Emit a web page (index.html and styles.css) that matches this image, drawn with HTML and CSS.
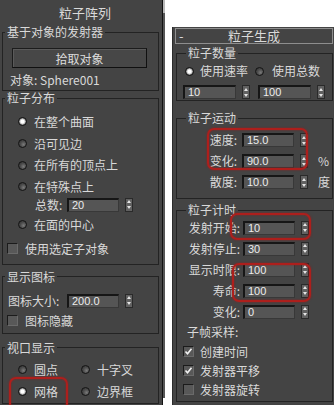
FILE: index.html
```html
<!DOCTYPE html>
<html lang="zh">
<head>
    <meta charset="UTF-8">
    <meta name="viewport" content="width=device-width, initial-scale=1.0">
    <title>粒子阵列 / 粒子生成</title>
    <link rel="stylesheet" href="styles.css">
</head>
<body>
<div class="page">
    <div class="panel left-panel">
        <div class="title">粒子阵列</div>

        <fieldset class="group emitter">
            <legend>基于对象的发射器</legend>
            <button class="pick">拾取对象</button>
            <div class="object">对象: Sphere001</div>
        </fieldset>

        <fieldset class="group spread">
            <legend>粒子分布</legend>
            <div class="radio-row"><span class="radio on"></span>在整个曲面</div>
            <div class="radio-row"><span class="radio"></span>沿可见边</div>
            <div class="radio-row"><span class="radio"></span>在所有的顶点上</div>
            <div class="radio-row"><span class="radio"></span>在特殊点上</div>
            <div class="field-row count">
                <span class="lbl">总数:</span><span class="input">20</span><span class="spin"></span>
            </div>
            <div class="radio-row center"><span class="radio"></span>在面的中心</div>
            <div class="check-row sub-obj"><span class="check"></span>使用选定子对象</div>
        </fieldset>

        <fieldset class="group icons">
            <legend>显示图标</legend>
            <div class="field-row icon-size">
                <span class="lbl">图标大小:</span><span class="input">200.0</span><span class="spin"></span>
            </div>
            <div class="check-row icon-hide"><span class="check"></span>图标隐藏</div>
        </fieldset>

        <fieldset class="group viewport">
            <legend>视口显示</legend>
            <div class="radio-grid">
                <div class="radio-row"><span class="radio"></span>圆点</div>
                <div class="radio-row"><span class="radio"></span>十字叉</div>
                <div class="radio-row"><span class="radio on"></span>网格</div>
                <div class="radio-row"><span class="radio"></span>边界框</div>
            </div>
        </fieldset>

        <div class="mark" style="left:9px; top:377px; width:59px; height:34px;"></div>
    </div>

    <div class="scroll"><div class="thumb"></div></div>

    <div class="panel right-panel">
        <div class="title-bar"><span class="minus">-</span><span class="caption">粒子生成</span><span></span></div>

        <fieldset class="group qty">
            <legend>粒子数量</legend>
            <div class="rate-row">
                <span class="radio on"></span><span class="opt">使用速率</span>
                <span class="radio second"></span><span class="opt">使用总数</span>
            </div>
            <div class="pair-row">
                <span class="input">10</span><span class="spin"></span>
                <span class="input second">100</span><span class="spin"></span>
            </div>
        </fieldset>

        <fieldset class="group motion">
            <legend>粒子运动</legend>
            <div class="field-row"><span class="lbl">速度:</span><span class="input">15.0</span><span class="spin"></span></div>
            <div class="field-row"><span class="lbl">变化:</span><span class="input">90.0</span><span class="spin"></span><span class="unit">%</span></div>
            <div class="field-row"><span class="lbl">散度:</span><span class="input">10.0</span><span class="spin"></span><span class="unit">度</span></div>
        </fieldset>

        <fieldset class="group timing">
            <legend>粒子计时</legend>
            <div class="field-row"><span class="lbl">发射开始:</span><span class="input">10</span><span class="spin"></span></div>
            <div class="field-row"><span class="lbl">发射停止:</span><span class="input">30</span><span class="spin"></span></div>
            <div class="field-row"><span class="lbl">显示时限:</span><span class="input">100</span><span class="spin"></span></div>
            <div class="field-row"><span class="lbl">寿命:</span><span class="input">100</span><span class="spin"></span></div>
            <div class="field-row"><span class="lbl">变化:</span><span class="input">0</span><span class="spin"></span></div>
            <div class="sub-head">子帧采样:</div>
            <div class="check-row">
                <span class="check"><svg width="9" height="9" viewBox="0 0 9 9"><path d="M1.5 4.5l2 2.2 4-5" fill="none" stroke="#f2f2f2" stroke-width="1.6"/></svg></span>创建时间
            </div>
            <div class="check-row">
                <span class="check"><svg width="9" height="9" viewBox="0 0 9 9"><path d="M1.5 4.5l2 2.2 4-5" fill="none" stroke="#f2f2f2" stroke-width="1.6"/></svg></span>发射器平移
            </div>
            <div class="check-row"><span class="check"></span>发射器旋转</div>
        </fieldset>

        <div class="mark" style="left:34px; top:101px; width:101px; height:42px;"></div>
        <div class="mark" style="left:57px; top:186px; width:81px; height:27px;"></div>
        <div class="mark" style="left:59px; top:236px; width:79px; height:39px;"></div>
    </div>
</div>
</body>
</html>
```

FILE: styles.css
```css
* {
    box-sizing: border-box;
}
body {
    margin: 0;
    background: #fff;
    font-family: "Noto Sans CJK SC", "Liberation Sans", sans-serif;
    font-size: 12px;
    line-height: 14px;
    color: #d9d9d9;
}
.page {
    display: flex;
    align-items: flex-start;
    width: 334px;
    height: 405px;
    overflow: hidden;
}
.panel {
    position: relative;
    background: #444;
}

/* left rollout */
.left-panel {
    width: 163px;
    height: 405px;
    border-right: 1px solid #121212;
}
.title {
    height: 25px;
    line-height: 25px;
    padding-left: 8px;
    text-align: center;
    font-size: 13px;
}
.scroll {
    width: 2px;
    height: 398px;
    margin-right: 7px;
    background: #565656;
}
.scroll .thumb {
    height: 13px;
    background: #b8b8b8;
}

/* group boxes */
.group {
    margin: 0;
    padding: 0;
    min-width: 0;
    border: 1px solid #232323;
}
.group legend {
    height: 14px;
    line-height: 14px;
    padding: 0 2px;
    font-size: 12px;
}
.left-panel .group {
    margin: 0 3px 0 2px;
}
.left-panel .group legend {
    margin-left: 2px;
}
.emitter {
    padding-bottom: 3px !important;
}
.pick {
    display: block;
    width: 135px;
    height: 20px;
    margin: 9px 0 0 9px;
    padding: 0;
    font-family: inherit;
    font-size: 12px;
    color: #dcdcdc;
    background: #474747;
    border: 1px solid #1c1c1c;
    border-right-color: #101010;
    border-bottom-color: #101010;
    box-shadow: inset 1px 1px 0 #5a5a5a;
}
.object {
    margin: 5px 0 0 7px;
}
.spread {
    padding: 6px 0 4px !important;
}
.icons {
    margin-top: 5px !important;
    padding: 6px 0 3px !important;
}
.viewport {
    margin-top: 7px !important;
    padding-top: 4px !important;
}

/* radio buttons and checkboxes */
.radio {
    flex: none;
    width: 9px;
    height: 9px;
    margin-right: 7px;
    border-radius: 50%;
    border: 1.5px solid #141414;
    background: radial-gradient(circle at 65% 65%, #7a7a7a 0, #4e4e4e 45%, #383838 80%);
}
.radio.on {
    background: radial-gradient(circle, #fff 0, #fff 1.6px, #bdbdbd 2.6px, #4a4a4a 4px);
}
.radio-row {
    display: flex;
    align-items: center;
    height: 21.7px;
    padding-left: 15px;
}
.radio-row.center {
    height: 22px;
    margin-top: 2px;
}
.radio-grid {
    display: grid;
    grid-template-columns: 63px auto;
}
.radio-grid .radio-row {
    height: 22px;
}
.check {
    flex: none;
    display: flex;
    align-items: center;
    justify-content: center;
    width: 11px;
    height: 11px;
    margin-right: 7px;
    background: #585858;
    border: 1px solid #1b1b1b;
    border-right-color: #6a6a6a;
    border-bottom-color: #6a6a6a;
}
.check-row {
    display: flex;
    align-items: center;
    height: 19px;
}
.sub-obj {
    height: 22px;
    margin: 2px 0 0 4px;
}
.icon-hide {
    height: 18px;
    margin-left: 4px;
}

/* number fields */
.field-row {
    display: flex;
    align-items: center;
    height: 21px;
}
.lbl {
    flex: none;
}
.input {
    flex: none;
    width: 52px;
    height: 14px;
    padding-left: 3px;
    font-family: "Liberation Sans", sans-serif;
    font-size: 11px;
    line-height: 11px;
    color: #ececec;
    background: #555;
    border: 1px solid #161616;
    border-top-width: 2px;
    border-left-width: 2px;
    border-right-color: #383838;
    border-bottom-color: #383838;
}
.spin {
    flex: none;
    display: flex;
    flex-direction: column;
    justify-content: space-around;
    align-items: center;
    width: 8px;
    height: 14px;
    margin-left: 6px;
    background: #616161;
    border: 1px solid #2a2a2a;
}
.spin::before,
.spin::after {
    content: "";
    border-left: 2.5px solid transparent;
    border-right: 2.5px solid transparent;
}
.spin::before {
    border-bottom: 3px solid #e6e6e6;
}
.spin::after {
    border-top: 3px solid #e6e6e6;
}
.count {
    height: 14px;
    margin-left: 32px;
}
.count .lbl {
    width: 32px;
}
.icon-size {
    height: 22px;
    margin-left: 5px;
}
.icon-size .lbl {
    width: 59px;
}

/* right rollout */
.right-panel {
    width: 162px;
    height: 378px;
    margin-top: 27px;
    border-left: 1px solid #2c2c2c;
}
.title-bar {
    display: grid;
    grid-template-columns: 12px 1fr 12px;
    align-items: center;
    height: 16px;
    margin: 1px 1px 0 2px;
    border: 1px solid #8e8e8e;
    font-size: 13px;
}
.minus {
    padding-left: 3px;
}
.caption {
    text-align: center;
}
.right-panel .group {
    margin: 0 1px 0 3px;
}
.right-panel .group legend {
    margin-left: 3px;
}
.qty {
    margin-top: 2px !important;
    padding: 1px 0 1px 6px !important;
}
.rate-row {
    display: flex;
    align-items: center;
    height: 20px;
    padding-left: 2px;
}
.rate-row .radio {
    margin-right: 6px;
}
.rate-row .radio.second {
    margin-left: 7px;
    margin-right: 8px;
}
.pair-row {
    display: flex;
    align-items: center;
    height: 14px;
    margin-top: 4px;
}
.pair-row .input {
    width: 53px;
}
.pair-row .input.second {
    margin-left: 8px;
}
.motion {
    margin-top: 10px !important;
    padding: 4.5px 0 5.5px 6px !important;
}
.motion .lbl {
    width: 54px;
    margin-right: 5px;
    text-align: right;
}
.unit {
    margin-left: 10px;
}
.timing {
    margin-top: 4px !important;
    padding: 0 0 2px 6px !important;
}
.timing .lbl {
    width: 57px;
    margin-right: 3px;
    text-align: right;
}
.sub-head {
    height: 20px;
    line-height: 20px;
    margin-left: 4px;
}
.timing .check {
    margin-right: 6px;
}

/* red highlight marks drawn over the screenshot */
.mark {
    position: absolute;
    border: 2.5px solid #ad1f1c;
    border-radius: 7px;
    box-shadow: 0 0 2px rgba(160, 25, 25, 0.9), inset 0 0 2px rgba(160, 25, 25, 0.9);
}
```
